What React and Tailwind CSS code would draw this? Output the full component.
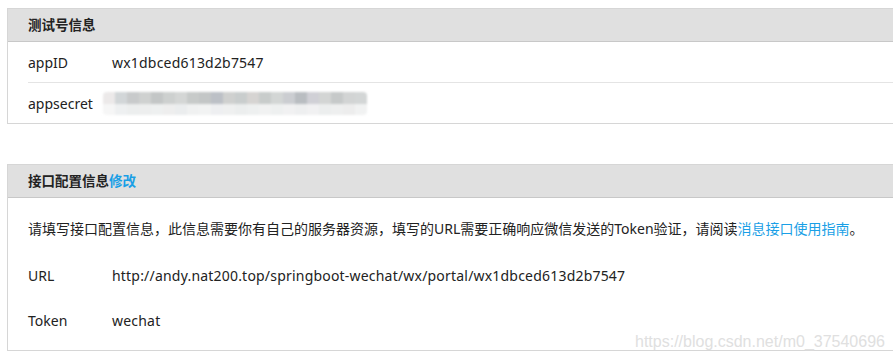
import React from "react";

const topCells = ["#ece9e9","#d2d6d8","#c8cacb","#cfd1d0","#c3c6c6","#cdd0cf","#d4d6d5","#c7cac9","#c3c6c6","#bcc0c6","#cfd0cf","#c9cdcd","#d6d4d2","#c8cccb","#d3d6d5","#cbcdd1","#b9bdc1","#d0d0d6","#d3d5d4","#c6c9c9","#d2d4d4","#d3d6d6"];
const botCells = ["#f6f6f6","#eef0f1","#eceeee","#edeeee","#eef0f0","#eeeeee","#ebedee","#f0f1f1","#f2f3f3","#eeeff1","#eff0f0","#eceeee","#eef0f0","#f1f2f2","#eef0f0","#f1f1f2","#eeeff0","#f1f1f2","#eceeee","#eeefef","#ededed","#f1f2f2"];

function Blur() {
  return (
    <div className="flex flex-col w-[264px] h-[23px] blur-[1px] rounded-sm overflow-hidden">
      <div className="flex h-[12px]">
        {topCells.map((c, i) => (
          <div key={i} className="w-[12px] h-full" style={{ background: c }} />
        ))}
      </div>
      <div className="flex h-[11px]">
        {botCells.map((c, i) => (
          <div key={i} className="w-[12px] h-full" style={{ background: c }} />
        ))}
      </div>
    </div>
  );
}

export default function App() {
  return (
    <div
      className="relative w-[893px] h-[360px] overflow-hidden bg-white text-[14px] text-[#222]"
      style={{ fontFamily: '"Noto Sans", "Noto Sans CJK SC", sans-serif' }}
    >
      <div className="pt-[8px] pl-[7px]">
        {/* Panel 1 */}
        <div className="w-[900px] border border-[#d6d6d6]">
          <div className="h-[33px] bg-[#e0e0e0] border-b border-[#c8c8c8] flex items-center pl-[20px] font-bold text-[13.5px] text-[#222]">
            测试号信息
          </div>
          <div className="pl-[20px]">
            <div className="h-[41px] flex items-center border-b border-[#e4e4e4]">
              <div className="w-[84px]">appID</div>
              <div className="tracking-[0.2px]">wx1dbced613d2b7547</div>
            </div>
            <div className="h-[40px] flex items-center">
              <div className="w-[75px]">appsecret</div>
              <Blur />
            </div>
          </div>
        </div>

        {/* Panel 2 */}
        <div className="w-[900px] mt-[40px] border border-[#d6d6d6]">
          <div className="h-[33px] bg-[#e0e0e0] border-b border-[#c8c8c8] flex items-center pl-[20px] font-bold text-[13.5px] text-[#222]">
            接口配置信息<span className="text-[#1a9fe6] font-bold">修改</span>
          </div>
          <div className="pl-[20px] pt-[20px] pb-[19px]">
            <div className="h-[22px] leading-[22px] whitespace-nowrap">
              请填写接口配置信息，此信息需要你有自己的服务器资源，填写的URL需要正确响应微信发送的Token验证，请阅读<span className="text-[#1a9fe6]">消息接口使用指南</span>。
            </div>
            <div className="mt-[24px] h-[22px] flex items-center">
              <div className="w-[84px]">URL</div>
              <div className="tracking-[0.2px]">http://andy.nat200.top/springboot-wechat/wx/portal/wx1dbced613d2b7547</div>
            </div>
            <div className="mt-[23px] h-[22px] flex items-center">
              <div className="w-[84px]">Token</div>
              <div className="tracking-[0.2px]">wechat</div>
            </div>
          </div>
        </div>
      </div>

      <div
        className="absolute left-[635px] top-[333px] text-[16px] leading-[18px] text-[#e0e0e0] whitespace-nowrap"
        style={{ fontFamily: '"Liberation Sans", Arial, sans-serif' }}
      >
        https://blog.csdn.net/m0_37540696
      </div>
    </div>
  );
}
